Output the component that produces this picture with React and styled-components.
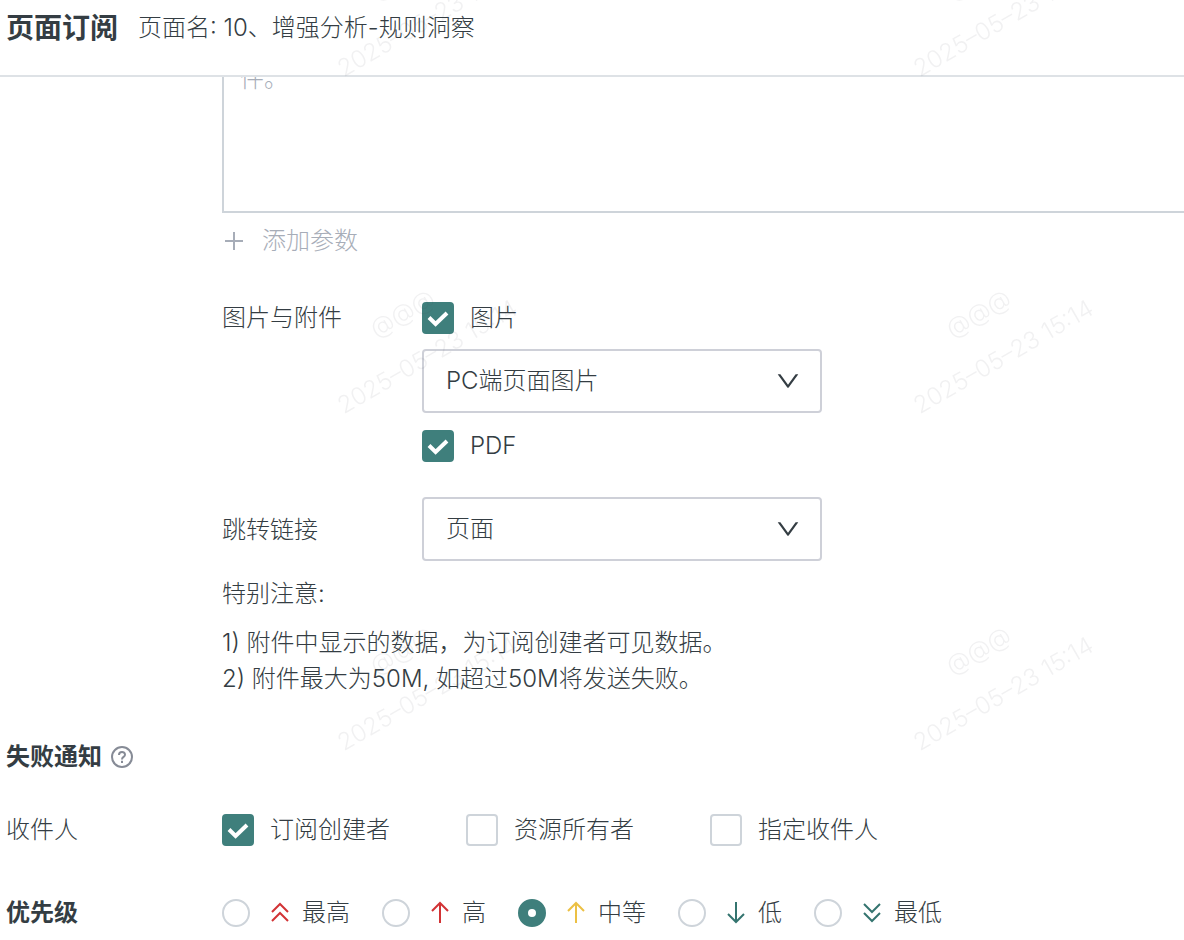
import React, { useState } from "react";
import styled, { createGlobalStyle } from "styled-components";

const recipientOptions = [
  { id: 'creator', label: '订阅创建者' },
  { id: 'owner', label: '资源所有者' },
  { id: 'custom', label: '指定收件人' },
];

const priorityOptions = [
  { id: 'highest', label: '最高', color: '#d23335', path: 'M4 11 L12 3 L20 11 M4 20 L12 12 L20 20' },
  { id: 'high', label: '高', color: '#d23335', path: 'M12 22 V2 M4 10 L12 2 L20 10' },
  { id: 'medium', label: '中等', color: '#ecc044', path: 'M12 22 V2 M4 10 L12 2 L20 10' },
  { id: 'low', label: '低', color: '#34746f', path: 'M12 1 V21 M4 13 L12 21 L20 13' },
  { id: 'lowest', label: '最低', color: '#34746f', path: 'M4 3 L12 11 L20 3 M4 12 L12 20 L20 12' },
];

const Checkbox = ({ label, checked, onChange }) => (
  <Choice>
    <BoxHolder>
      <Box type="checkbox" checked={checked} onChange={onChange} />
      {checked && (
        <Tick viewBox="0 0 32 32" aria-hidden="true">
          <path d="M7 15.5 L13.6 22 L25 11" />
        </Tick>
      )}
    </BoxHolder>
    {label}
  </Choice>
);

const Dropdown = ({ id, label, options }) => (
  <SelectHolder>
    <Select id={id} aria-label={label}>
      {options.map((option) => <option key={option}>{option}</option>)}
    </Select>
    <Arrow viewBox="64 64 896 896" aria-hidden="true">
      <path d="M884 256h-75c-5.1 0-9.9 2.5-12.9 6.6L512 654.2 227.9 262.6c-3-4.1-7.8-6.6-12.9-6.6h-75c-6.5 0-10.3 7.4-6.5 12.7l352.6 486.1c12.8 17.6 39 17.6 51.7 0l352.6-486.1c3.9-5.3.1-12.7-6.4-12.7z" />
    </Arrow>
  </SelectHolder>
);

const Watermark = () => (
  <WatermarkLayer aria-hidden="true">
    <defs>
      <pattern id="mark" x="139" y="188" width="576" height="337" patternUnits="userSpaceOnUse">
        <g transform="translate(288 168) rotate(-30)">
          <text y="-41">@@@</text>
          <text y="9">2025–05–23 15:14</text>
        </g>
      </pattern>
    </defs>
    <rect width="100%" height="100%" fill="url(#mark)" />
  </WatermarkLayer>
);

export default function App() {
  const [image, setImage] = useState(true);
  const [pdf, setPdf] = useState(true);
  const [recipients, setRecipients] = useState(['creator']);
  const [priority, setPriority] = useState('medium');

  function toggleRecipient(id) {
    setRecipients(recipients.includes(id) ? recipients.filter((r) => r !== id) : [...recipients, id]);
  }

  return (
    <Page>
      <GlobalStyle />
      <Header>
        <Title>页面订阅</Title>
        <PageName>页面名: 10、增强分析-规则洞察</PageName>
      </Header>

      <Main>
        <Content>
          <Editor>
            <Message aria-label="正文" placeholder="件。" />
          </Editor>
          <AddButton type="button">
            <AddIcon viewBox="0 0 24 24" aria-hidden="true">
              <path d="M3 12 H21 M12 3 V21" />
            </AddIcon>
            添加参数
          </AddButton>

          <Field $top={45}>
            <FieldName>图片与附件</FieldName>
            <div>
              <Checkbox label="图片" checked={image} onChange={() => setImage(!image)} />
              <Dropdown id="image-type" label="图片类型" options={['PC端页面图片']} />
              <Checkbox label="PDF" checked={pdf} onChange={() => setPdf(!pdf)} />
            </div>
          </Field>
          <Field $top={20} $center>
            <FieldName as="label" htmlFor="link">跳转链接</FieldName>
            <Dropdown id="link" options={['页面']} />
          </Field>

          <NoteTitle>特别注意:</NoteTitle>
          <Note>
            1) 附件中显示的数据，为订阅创建者可见数据。<br />
            2) 附件最大为50M, 如超过50M将发送失败。
          </Note>
        </Content>

        <SectionTitle>
          失败通知
          <HelpIcon viewBox="0 0 24 24" aria-hidden="true">
            <circle cx="12" cy="12" r="10" />
            <path d="M9 10 C9 6 15 6 15 9.7 C15 12 12 11.8 12 14.4 M12 15.8 V18" />
          </HelpIcon>
        </SectionTitle>

        <Row $top={41}>
          <RowName>收件人</RowName>
          <Options $gap={76}>
            {recipientOptions.map(({ id, label }) => (
              <Checkbox
                key={id}
                label={label}
                checked={recipients.includes(id)}
                onChange={() => toggleRecipient(id)}
              />
            ))}
          </Options>
        </Row>

        <Row $top={51}>
          <RowName $bold>优先级</RowName>
          <Options $gap={32} role="radiogroup" aria-label="优先级">
            {priorityOptions.map(({ id, label, color, path }) => (
              <RadioChoice key={id}>
                <Radio
                  type="radio"
                  name="priority"
                  checked={priority === id}
                  onChange={() => setPriority(id)}
                />
                <PriorityIcon viewBox="0 0 24 24" $color={color} aria-hidden="true">
                  <path d={path} />
                </PriorityIcon>
                {label}
              </RadioChoice>
            ))}
          </Options>
        </Row>
      </Main>

      <Watermark />
    </Page>
  );
}

const GlobalStyle = createGlobalStyle`
  * {
    box-sizing: border-box;
  }

  body {
    margin: 0;
    background-color: #fff;
  }

  body, button, select, textarea {
    font-family: Inter, "Noto Sans CJK SC", sans-serif;
    font-size: 24px;
    font-weight: 300;
    line-height: 32px;
    color: #343d43;
  }
`;

const Page = styled.div`
  position: relative;
  min-height: 100vh;
  overflow: hidden;
`;

const Header = styled.header`
  display: flex;
  align-items: center;
  gap: 20px;

  padding: 12px 6px 31px;
  border-bottom: 2px solid #dee2e6;
`;

const Title = styled.h1`
  margin: 0;
  font-size: 28px;
  font-weight: 700;
  line-height: 32px;
`;

const PageName = styled.span``;

const Main = styled.main`
  padding-left: 6px;
`;

const Content = styled.div`
  padding-left: 216px;
`;

const Editor = styled.div`
  overflow: hidden;
`;

const Message = styled.textarea`
  display: block;
  width: 100%;
  height: 156px;
  margin-top: -20px;
  padding: 4px 16px;

  border: 2px solid #ced4da;
  border-right: 0;
  outline: 0;
  resize: none;

  &::placeholder {
    color: #a7adb8;
    opacity: 1;
  }
`;

const AddButton = styled.button`
  display: flex;
  align-items: center;
  gap: 16px;

  margin-top: 12px;
  padding: 0;
  border: 0;
  background: none;
  color: #a7adb8;
  cursor: pointer;
`;

const AddIcon = styled.svg`
  width: 24px;
  height: 24px;
  fill: none;
  stroke: currentColor;
  stroke-width: 2;
`;

const Field = styled.div`
  display: grid;
  grid-template-columns: 200px 1fr;
  align-items: ${({ $center }) => ($center ? 'center' : 'start')};
  margin-top: ${({ $top }) => $top}px;
`;

const FieldName = styled.span``;

const SelectHolder = styled.div`
  position: relative;
  max-width: 400px;
  margin: 15px 0 17px;
`;

const Select = styled.select`
  display: block;
  appearance: none;
  width: 100%;
  height: 64px;
  padding: 0 52px 0 22px;

  border: 2px solid #ced0d8;
  border-radius: 4px;
  background-color: #fff;
  cursor: pointer;
`;

const Arrow = styled.svg`
  position: absolute;
  top: 20px;
  right: 22px;
  width: 24px;
  height: 24px;
  fill: #343d43;
  pointer-events: none;
`;

const Choice = styled.label`
  display: flex;
  align-items: center;
  gap: 16px;
  width: fit-content;
  cursor: pointer;
`;

const BoxHolder = styled.span`
  display: grid;

  > * {
    grid-area: 1 / 1;
  }
`;

const Box = styled.input`
  appearance: none;
  width: 32px;
  height: 32px;
  margin: 0;
  border: 2px solid #ced4da;
  border-radius: 4px;

  &:checked {
    border-color: #3f7f7c;
    background-color: #3f7f7c;
  }
`;

const Tick = styled.svg`
  width: 32px;
  height: 32px;
  fill: none;
  stroke: #fff;
  stroke-width: 4;
  pointer-events: none;
`;

const NoteTitle = styled.p`
  margin: 0;
`;

const Note = styled.p`
  margin: 15px 0 0;
  line-height: 36px;
`;

const SectionTitle = styled.h2`
  display: flex;
  align-items: center;
  gap: 8px;

  margin: 44px 0 0;
  font-size: 24px;
  font-weight: 700;
  line-height: 32px;
`;

const HelpIcon = styled.svg`
  width: 24px;
  height: 24px;
  fill: none;
  stroke: #868b96;
  stroke-width: 2;
`;

const Row = styled.div`
  display: grid;
  grid-template-columns: 216px 1fr;
  align-items: center;
  margin-top: ${({ $top }) => $top}px;
`;

const RowName = styled.span`
  font-weight: ${({ $bold }) => ($bold ? 700 : 300)};
`;

const Options = styled.div`
  display: flex;
  flex-wrap: wrap;
  gap: ${({ $gap }) => $gap}px;
`;

const RadioChoice = styled.label`
  display: flex;
  align-items: center;
  cursor: pointer;
`;

const Radio = styled.input`
  appearance: none;
  width: 28px;
  height: 28px;
  margin: 0 18px 0 0;
  border: 2px solid #ced4da;
  border-radius: 50%;

  &:checked {
    border: 10px solid #3f7f7c;
  }
`;

const PriorityIcon = styled.svg`
  width: 24px;
  height: 24px;
  margin-right: 10px;
  fill: none;
  stroke: ${({ $color }) => $color};
  stroke-width: 2;
`;

const WatermarkLayer = styled.svg`
  position: absolute;
  inset: 0;
  width: 100%;
  height: 100%;
  pointer-events: none;

  text {
    font-size: 24px;
    font-weight: 300;
    text-anchor: middle;
    fill: rgba(52, 61, 67, 0.07);
  }
`;
